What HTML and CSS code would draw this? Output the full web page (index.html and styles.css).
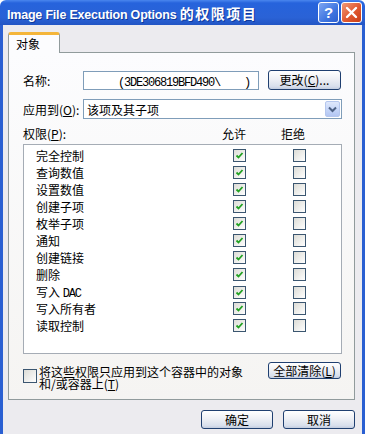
FILE: index.html
```html
<!DOCTYPE html>
<html lang="zh-CN">
<head>
    <meta charset="UTF-8">
    <meta name="viewport" content="width=device-width, initial-scale=1.0">
    <title>Image File Execution Options 的权限项目</title>
    <link rel="stylesheet" href="styles.css">
</head>
<body>
    <div class="window">
        <div class="titlebar">
            <span class="title">Image File Execution Options <span class="title_cn">的权限项目</span></span>
            <div class="caption_buttons">
                <span class="cap_btn help">?</span>
                <span class="cap_btn close">
                    <svg width="13" height="13" viewBox="0 0 13 13"><path d="M2 2 L11 11 M11 2 L2 11" stroke="#fff" stroke-width="2.4" stroke-linecap="round"/></svg>
                </span>
            </div>
        </div>

        <div class="frame">
            <div class="tabs">
                <div class="tab">对象</div>
            </div>

            <div class="panel">
                <div class="field_row name_row">
                    <span class="field_label">名称:</span>
                    <div class="textbox"><span class="mono">(3DE306819BFD490\&nbsp;&nbsp;&nbsp;&nbsp;)</span></div>
                    <button class="btn change_btn">更改(<u>C</u>)...</button>
                </div>

                <div class="field_row apply_row">
                    <span class="field_label">应用到(<u>O</u>):</span>
                    <div class="combo">
                        <span class="combo_text">该项及其子项</span>
                        <span class="combo_arrow">
                            <svg width="9" height="7" viewBox="0 0 9 7"><path d="M1 1.5 L4.5 5 L8 1.5" fill="none" stroke="#4d6185" stroke-width="2"/></svg>
                        </span>
                    </div>
                </div>

                <div class="perm_header">
                    <span>权限(<u>P</u>):</span>
                    <span>允许</span>
                    <span>拒绝</span>
                </div>

                <div class="perm_list" id="permList"></div>

                <div class="bottom_row">
                    <div class="inherit">
                        <span class="checkbox"></span>
                        <span class="inherit_text">将这些权限只应用到这个容器中的对象<br>和/或容器上(<u>T</u>)</span>
                    </div>
                    <button class="btn clear_btn">全部清除(<u>L</u>)</button>
                </div>
            </div>

            <div class="dialog_buttons">
                <button class="btn dlg_btn">确定</button>
                <button class="btn dlg_btn">取消</button>
            </div>
        </div>
    </div>

<script>
let perms = ["完全控制", "查询数值", "设置数值", "创建子项", "枚举子项", "通知",
             "创建链接", "删除", "写入 DAC", "写入所有者", "读取控制"];

let checkSvg = '<svg width="9" height="9" viewBox="0 0 9 9"><path d="M1.5 4.5 L3.5 6.5 L7.5 2" fill="none" stroke="#21a121" stroke-width="1.8"/></svg>';

let list = document.getElementById("permList");
perms.forEach(name => {
    let label = name.replace(" DAC", '&nbsp;<span class="mono">DAC</span>');
    list.innerHTML += `<div class="perm_row">
        <span class="perm_name">${label}</span>
        <span class="checkbox checked">${checkSvg}</span>
        <span class="checkbox"></span>
    </div>`;
});
</script>
</body>
</html>
```

FILE: styles.css
```css
body {
  margin: 0;
  width: 365px;
  height: 434px;
  overflow: hidden;
  font-family: "Noto Sans CJK SC", sans-serif;
  font-size: 12px;
  color: #000;
}

.window {
  height: 434px;
  display: flex;
  flex-direction: column;
}

.titlebar {
  height: 25px;
  flex: none;
  display: flex;
  align-items: center;
  justify-content: space-between;
  background: linear-gradient(#4a86ee 0, #2663dc 12%, #2a62d6 70%, #2255c4 100%);
  border-radius: 6px 6px 0 0;
  padding: 0 3px 0 7px;
}

.title {
  color: #fff;
  font-family: "Liberation Sans", sans-serif;
  font-weight: bold;
  font-size: 12.5px;
  letter-spacing: -0.2px;
  text-shadow: 1px 1px 0 #0f3a9a;
  white-space: nowrap;
}

.title_cn {
  font-family: "Noto Sans CJK SC", sans-serif;
  font-size: 14px;
  letter-spacing: 1.5px;
}

.caption_buttons {
  display: flex;
  gap: 2px;
}

.cap_btn {
  width: 19px;
  height: 19px;
  border: 1px solid #fff;
  border-radius: 3px;
  display: flex;
  align-items: center;
  justify-content: center;
  color: #fff;
  font-family: "Liberation Sans", sans-serif;
  font-weight: bold;
  font-size: 15px;
}

.help {
  background: linear-gradient(135deg, #7ea6f2, #3f75e0 60%, #2c5fd0);
}

.close {
  background: linear-gradient(135deg, #f09a78, #e0582f 55%, #c93e18);
}

.frame {
  flex: 1;
  background: #ecebef;
  border-left: 3px solid #2a5fd2;
  border-right: 3px solid #2a5fd2;
  padding: 7px 7px 0 5px;
}

.tabs {
  display: flex;
  position: relative;
  z-index: 1;
  margin-bottom: -1px;
}

.tab {
  width: 43px;
  height: 17px;
  background: #fcfcfe;
  border: 1px solid #919b9c;
  border-top: 3px solid #f4b53a;
  border-bottom: none;
  border-radius: 3px 3px 0 0;
  padding-left: 7px;
  padding-bottom: 1px;
  line-height: 17px;
}

.panel {
  height: 346px;
  border: 1px solid #919b9c;
  background: linear-gradient(#fcfcfe, #f5f4f2);
  padding: 0 12px 0 14px;
}

.field_row {
  display: flex;
  align-items: center;
}

.name_row {
  margin-top: 17px;
  height: 20px;
}

.apply_row {
  margin-top: 9px;
  height: 20px;
}

.field_label {
  width: 60px;
  flex: none;
}

.mono {
  font-family: "Liberation Mono", monospace;
  letter-spacing: -1.2px;
}

.textbox {
  width: 140px;
  height: 17px;
  border: 1px solid #7f9db9;
  background: #fff;
  padding-left: 34px;
  line-height: 17px;
  white-space: nowrap;
  overflow: hidden;
}

.btn {
  font-family: "Noto Sans CJK SC", sans-serif;
  font-size: 12px;
  color: #000;
  border: 1px solid #1f3f70;
  border-radius: 3px;
  background: linear-gradient(#ffffff, #eef0f5 45%, #d8dfec 85%, #c3cde0);
  padding: 0;
  line-height: 1;
}

.change_btn {
  width: 73px;
  height: 20px;
  margin-left: 9px;
}

.combo {
  width: 257px;
  height: 18px;
  border: 1px solid #7f9db9;
  background: #fff;
  display: flex;
  align-items: center;
  justify-content: space-between;
}

.combo_text {
  padding-left: 3px;
}

.combo_arrow {
  width: 15px;
  height: 16px;
  margin-right: 1px;
  border: 1px solid #b5c7ee;
  border-radius: 2px;
  box-sizing: border-box;
  background: linear-gradient(#dfe8fc, #c3d4f8 60%, #b3c6f2);
  display: flex;
  align-items: center;
  justify-content: center;
}

.perm_header {
  margin-top: 7px;
  height: 15px;
  line-height: 15px;
  display: grid;
  grid-template-columns: 199px 59px auto;
}

.perm_list {
  margin-top: 3px;
  width: 317px;
  height: 206px;
  border: 1px solid #a5acb5;
  background: #fff;
  padding-top: 2px;
}

.perm_row {
  height: 17px;
  display: grid;
  grid-template-columns: 197px 60px auto;
  align-items: center;
  padding-left: 12px;
}

.checkbox {
  width: 11px;
  height: 11px;
  border: 1px solid #3b5670;
  background: linear-gradient(135deg, #dcdcd6, #f4f4f2 70%, #ffffff);
  display: flex;
  align-items: center;
  justify-content: center;
}

.bottom_row {
  margin-top: 8px;
  display: flex;
  justify-content: space-between;
  align-items: flex-start;
  padding-right: 1px;
}

.inherit {
  display: flex;
  align-items: flex-start;
}

.inherit .checkbox {
  margin-top: 7px;
  width: 12px;
  height: 12px;
}

.inherit_text {
  margin-left: 2px;
  margin-top: 4px;
  line-height: 12px;
}

.clear_btn {
  width: 73px;
  height: 17px;
}

.dialog_buttons {
  margin-top: 10px;
  display: flex;
  justify-content: flex-end;
  gap: 10px;
}

.dlg_btn {
  width: 72px;
  height: 19px;
}
```
